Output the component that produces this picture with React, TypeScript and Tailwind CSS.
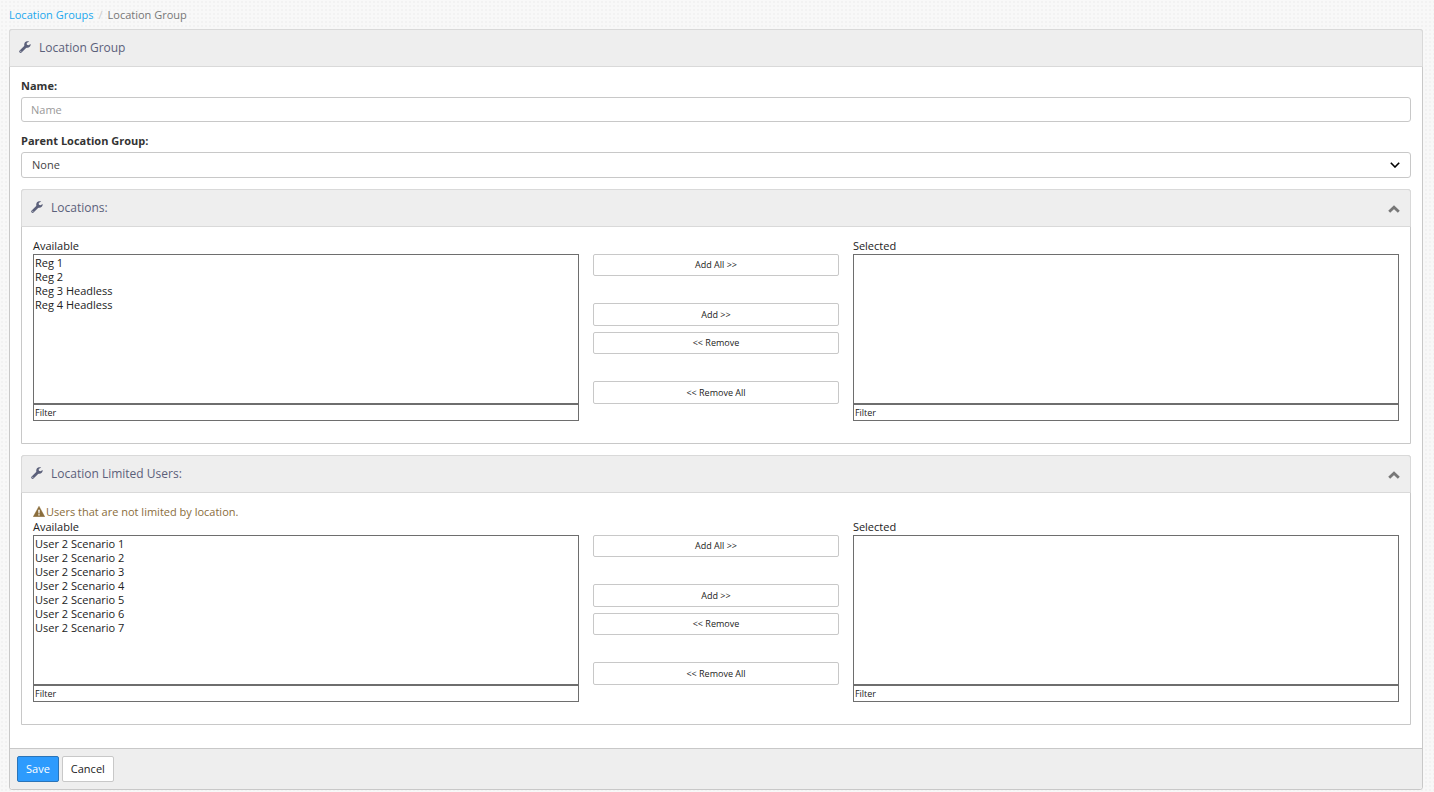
import { useState } from 'react'

interface PickListProps {
  id: string
  items: string[]
}

interface SectionProps {
  title: string
  children: React.ReactNode
}

const buttonClass =
  'block w-full rounded-[2px] border border-[#c8c8c8] bg-white text-center text-[9px] leading-[14px] text-[#222]'

function WrenchIcon() {
  return (
    <svg viewBox="0 0 12 12" className="mb-0.5 size-3 shrink-0" aria-hidden="true">
      <path d="M1.6 10.5 L6.9 5.2" fill="none" stroke="currentColor" strokeWidth="2.7" strokeLinecap="round" />
      <path
        d="M10.2 0.6 C8.6 -0.2 6.6 0.2 5.7 1.7 C5 2.9 5.1 4.2 5.7 5.3 L6.9 6.4 C8.2 7 9.7 6.8 10.7 5.8 C11.5 5 11.8 3.9 11.6 2.9 L9.6 4.3 L7.9 3.8 L7.7 2.1 Z"
        fill="currentColor"
      />
      <circle cx="1.8" cy="10.2" r="0.5" fill="#eee" />
    </svg>
  )
}

function WarningIcon() {
  return (
    <svg viewBox="0 0 12 11" className="h-[11px] w-3 shrink-0" aria-hidden="true">
      <path d="M6 0.2 L11.8 10.8 H0.2 Z" fill="currentColor" stroke="currentColor" strokeWidth="0.4" strokeLinejoin="round" />
      <path d="M5.2 3.8 H6.8 L6.5 7.4 H5.5 Z M5.3 8.2 H6.7 V9.6 H5.3 Z" fill="#fff" />
    </svg>
  )
}

function ListBox({ id, label, items }: { id: string; label: string; items: string[] }) {
  const [filter, setFilter] = useState('')
  const visible = items.filter((item) => item.toLowerCase().includes(filter.toLowerCase()))

  return (
    <div className="min-w-0">
      <label htmlFor={id} className="mb-px block text-[11px] leading-[15px] text-[#222]">
        {label}
      </label>
      <select
        id={id}
        multiple
        className="block h-[150px] w-full overflow-auto rounded-none border border-[#6e6e6e] bg-white p-0 text-[11px] text-[#222]"
      >
        {visible.map((item) => (
          <option key={item} className="h-[14px] min-h-0 px-px py-0">
            {item}
          </option>
        ))}
      </select>
      <input
        type="text"
        aria-label={`Filter ${label}`}
        placeholder="Filter"
        value={filter}
        onChange={(e) => setFilter(e.target.value)}
        className="block h-[17px] w-full rounded-none border border-[#6e6e6e] bg-white px-px text-[9px] text-[#222] placeholder:text-[#222]"
      />
    </div>
  )
}

function PickList({ id, items }: PickListProps) {
  return (
    <div className="grid grid-cols-[40fr_18fr_40fr] gap-x-[14px]">
      <ListBox id={`${id}-available`} label="Available" items={items} />
      <div className="pt-4">
        <button type="button" className={`${buttonClass} mb-[27px] h-[22px]`}>Add All &gt;&gt;</button>
        <button type="button" className={`${buttonClass} mb-[6px] h-[23px]`}>Add &gt;&gt;</button>
        <button type="button" className={`${buttonClass} mb-[27px] h-[22px]`}>&lt;&lt; Remove</button>
        <button type="button" className={`${buttonClass} h-[23px]`}>&lt;&lt; Remove All</button>
      </div>
      <ListBox id={`${id}-selected`} label="Selected" items={[]} />
    </div>
  )
}

function Section({ title, children }: SectionProps) {
  const [open, setOpen] = useState(true)

  return (
    <section className="rounded-t-[3px] border border-[#c8c8c8] bg-white">
      <header className="-mx-px -mt-px flex h-[38px] items-center rounded-t-[3px] border border-[#d9d9d9] bg-[#eee] pl-[9px] pr-[10px] text-[#5b607a]">
        <WrenchIcon />
        <h2 className="ml-[8px] flex-1 text-[12px] leading-4">{title}</h2>
        <button type="button" aria-label={`Toggle ${title}`} onClick={() => setOpen(!open)}>
          <svg viewBox="0 0 12 8" className="mt-px h-2 w-3" fill="none" stroke="#777" strokeWidth="2.8" aria-hidden="true">
            <path d="M1.2 6.8 L6 2.2 L10.8 6.8" />
          </svg>
        </button>
      </header>
      {open && <div className="px-[11px] pb-[22px] pt-[11px]">{children}</div>}
    </section>
  )
}

const locations = ['Reg 1', 'Reg 2', 'Reg 3 Headless', 'Reg 4 Headless']
const users = [1, 2, 3, 4, 5, 6, 7].map((n) => `User 2 Scenario ${n}`)

export default function App() {
  return (
    <div className="min-h-screen bg-[#f8f8f8] bg-[radial-gradient(#f2f2f2_1px,transparent_1px)] bg-[size:4px_4px] pb-[2px] pl-[9px] pr-[11px] font-['Open_Sans',sans-serif] text-[11px] text-[#333]">
      <nav aria-label="Breadcrumb" className="flex h-[29px] items-center leading-[15px]">
        <a href="#groups" className="text-[#1ba8ee]">Location Groups</a>
        <span className="px-[5px] text-[#ccc]">/</span>
        <span className="text-[#777]">Location Group</span>
      </nav>

      <main className="rounded-[3px] border border-[#c8c8c8] bg-white">
        <header className="-mx-px -mt-px flex h-[38px] items-center rounded-t-[3px] border border-[#d9d9d9] bg-[#eee] px-[9px] text-[#5b607a]">
          <WrenchIcon />
          <h1 className="ml-[8px] text-[12px] leading-4">Location Group</h1>
        </header>

        <form onSubmit={(e) => e.preventDefault()}>
          <div className="px-[11px] pb-[23px] pt-[11px]">
            <label htmlFor="name" className="mb-1 block font-bold leading-[15px]">Name:</label>
            <input
              id="name"
              type="text"
              placeholder="Name"
              className="mb-[11px] block h-[25px] w-full rounded-[3px] border border-[#c8c8c8] bg-white px-[9px] placeholder:text-[#999]"
            />
            <label htmlFor="parent" className="mb-1 block font-bold leading-[15px]">Parent Location Group:</label>
            <div className="relative mb-[11px]">
              <select
                id="parent"
                className="block h-[26px] w-full appearance-none rounded-[3px] border border-[#c8c8c8] bg-white px-[10px] text-[#444]"
              >
                <option>None</option>
              </select>
              <svg viewBox="0 0 10 6" className="pointer-events-none absolute right-[11px] top-[10px] h-[6px] w-[10px]" fill="none" stroke="#000" strokeWidth="1.6" aria-hidden="true">
                <path d="M0.8 0.8 L5 5 L9.2 0.8" />
              </svg>
            </div>

            <Section title="Locations:">
              <PickList id="locations" items={locations} />
            </Section>
            <div className="mt-[11px]">
              <Section title="Location Limited Users:">
                <p className="flex items-center gap-px leading-[15px] text-[#8a6d3b]">
                  <WarningIcon />
                  Users that are not limited by location.
                </p>
                <PickList id="users" items={users} />
              </Section>
            </div>
          </div>

          <footer className="flex gap-[3px] rounded-b-[3px] border-t border-[#c8c8c8] bg-[#eee] px-[7px] py-[7px]">
            <button type="submit" className="h-[26px] rounded-[2px] border border-[#2a74b8] bg-[#2d9bfd] px-2 text-white">Save</button>
            <button type="button" className="h-[26px] rounded-[2px] border border-[#c8c8c8] bg-white px-2 text-[#222]">Cancel</button>
          </footer>
        </form>
      </main>
    </div>
  )
}
